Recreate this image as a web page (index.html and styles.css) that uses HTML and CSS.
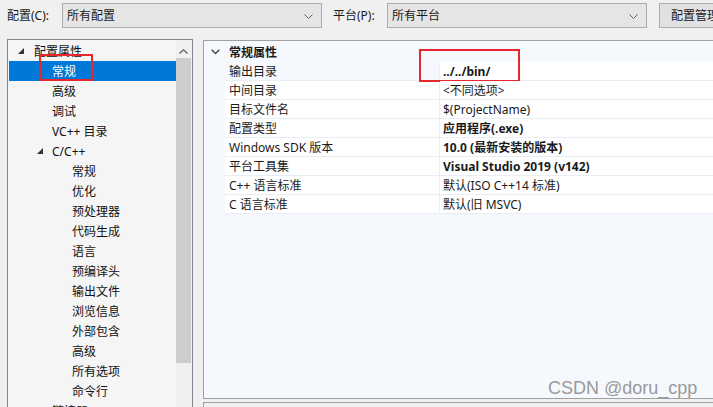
FILE: index.html
```html
<!DOCTYPE html>
<html lang="zh-CN">
<head>
<meta charset="utf-8">
<title>属性页</title>
<link rel="stylesheet" href="styles.css">
</head>
<body>
<div class="topbar">
  <span class="lbl">配置(C):</span>
  <div class="combo combo-1"><span>所有配置</span><svg class="chev" width="9" height="5" viewBox="0 0 9 5"><polyline points="0.5,0.5 4.5,4.5 8.5,0.5" fill="none" stroke="#606060" stroke-width="1"/></svg></div>
  <span class="lbl lbl-2">平台(P):</span>
  <div class="combo combo-2"><span>所有平台</span><svg class="chev" width="9" height="5" viewBox="0 0 9 5"><polyline points="0.5,0.5 4.5,4.5 8.5,0.5" fill="none" stroke="#606060" stroke-width="1"/></svg></div>
  <div class="btn">配置管理器(O)...</div>
</div>
<div class="main">
  <div class="tree">
    <div class="tree-list">
      <div class="node lvl0"><span class="tri"></span>配置属性</div>
      <div class="node lvl1 selected">常规<span class="mark mark-tree"></span></div>
      <div class="node lvl1">高级</div>
      <div class="node lvl1">调试</div>
      <div class="node lvl1">VC++ 目录</div>
      <div class="node lvl1 has-tri"><span class="tri"></span>C/C++</div>
      <div class="node lvl2">常规</div>
      <div class="node lvl2">优化</div>
      <div class="node lvl2">预处理器</div>
      <div class="node lvl2">代码生成</div>
      <div class="node lvl2">语言</div>
      <div class="node lvl2">预编译头</div>
      <div class="node lvl2">输出文件</div>
      <div class="node lvl2">浏览信息</div>
      <div class="node lvl2">外部包含</div>
      <div class="node lvl2">高级</div>
      <div class="node lvl2">所有选项</div>
      <div class="node lvl2">命令行</div>
      <div class="node lvl1 has-tri"><span class="tri tri-closed"></span>链接器</div>
    </div>
    <div class="vscroll">
      <svg class="up" width="9" height="5" viewBox="0 0 9 5"><polyline points="0.5,4.5 4.5,0.8 8.5,4.5" fill="none" stroke="#606060" stroke-width="1.3"/></svg>
      <div class="thumb"></div>
    </div>
  </div>
  <div class="right">
    <div class="grid">
      <div class="cat"><svg class="cat-chev" width="9" height="6" viewBox="0 0 9 6"><polyline points="0.7,0.8 4.5,4.6 8.3,0.8" fill="none" stroke="#444" stroke-width="1.4"/></svg><span>常规属性</span></div>
      <div class="row first"><div class="name">输出目录</div><div class="val b">../../bin/<span class="mark mark-grid"></span></div></div>
      <div class="row"><div class="name">中间目录</div><div class="val">&lt;不同选项&gt;</div></div>
      <div class="row"><div class="name">目标文件名</div><div class="val">$(ProjectName)</div></div>
      <div class="row"><div class="name">配置类型</div><div class="val b">应用程序(.exe)</div></div>
      <div class="row"><div class="name">Windows SDK 版本</div><div class="val b">10.0 (最新安装的版本)</div></div>
      <div class="row"><div class="name">平台工具集</div><div class="val b">Visual Studio 2019 (v142)</div></div>
      <div class="row"><div class="name">C++ 语言标准</div><div class="val">默认(ISO C++14 标准)</div></div>
      <div class="row"><div class="name">C 语言标准</div><div class="val">默认(旧 MSVC)</div></div>
    </div>
    <div class="desc"></div>
  </div>
</div>
<div class="watermark">CSDN @doru_cpp</div>
</body>
</html>
```
FILE: styles.css
```css
* { box-sizing: border-box; }
html, body { margin: 0; padding: 0; }
body {
  width: 713px;
  height: 407px;
  overflow: hidden;
  position: relative;
  background: #f0f0f0;
  color: #1a1a1a;
  font-family: "Noto Sans", "Noto Sans CJK SC", sans-serif;
  font-size: 12px;
  line-height: 16px;
}
.topbar {
  height: 39px;
  display: flex;
  align-items: flex-start;
  padding-top: 3px;
  padding-left: 7px;
  white-space: nowrap;
}
.lbl { margin-top: 5px; width: 55px; flex-shrink: 0; }
.lbl-2 { width: 54px; margin-left: 11px; }
.combo {
  height: 25px;
  width: 260px;
  flex-shrink: 0;
  background: #e5e5e5;
  border: 1px solid #acacac;
  display: flex;
  align-items: center;
  justify-content: space-between;
  padding: 1px 8px 0 4px;
}
.btn {
  margin-left: 12px;
  height: 25px;
  width: 90px;
  flex-shrink: 0;
  background: #e1e1e1;
  border: 1px solid #adadad;
  padding: 4px 0 0 11px;
}
.main {
  display: flex;
  align-items: flex-start;
  padding-left: 7px;
}
.tree {
  width: 186px;
  height: 400px;
  flex-shrink: 0;
  background: #f5f5f5;
  border: 1px solid #828790;
  border-bottom: none;
  display: flex;
}
.tree-list {
  flex: 1;
  padding: 1px 0 0 1px;
}
.node {
  height: 20px;
  line-height: 21px;
  position: relative;
  white-space: nowrap;
  color: #111;
}
.lvl0 { padding-left: 25px; }
.lvl1 { padding-left: 43px; }
.lvl2 { padding-left: 63px; }
.selected { background: #0078d7; color: #fff; }
.tri {
  position: absolute;
  width: 0; height: 0;
  border-left: 6px solid transparent;
  border-bottom: 6px solid #333;
  top: 7px;
}
.lvl0 .tri { left: 9px; }
.has-tri .tri { left: 28px; }
.tri-closed {
  border: none;
  border-left: 4px solid #555;
  border-top: 4px solid transparent;
  border-bottom: 4px solid transparent;
  top: 6px;
}
.mark {
  position: absolute;
  border: 2px solid #e8262d;
  pointer-events: none;
}
.mark-tree { left: 30px; top: -7px; width: 54px; height: 27px; }
.vscroll {
  width: 16px;
  background: #f0f0f0;
  position: relative;
}
.up { position: absolute; left: 3px; top: 9px; }
.thumb {
  position: absolute;
  left: 0; right: 1px;
  top: 18px;
  height: 305px;
  background: #cdcdcd;
}
.right {
  margin-left: 10px;
  margin-top: 1px;
  width: 540px;
  flex-shrink: 0;
}
.grid {
  height: 359px;
  background: #f5f8fc;
  border: 1px solid #a0a0a0;
  border-right: none;
}
.cat {
  height: 21px;
  display: flex;
  align-items: center;
  padding-top: 3px;
  font-weight: bold;
  color: #1a1a1a;
}
.cat-chev { margin-left: 7px; margin-right: 9px; margin-top: -2px; }
.row {
  height: 19px;
  display: flex;
  margin-left: 21px;
  border-bottom: 1px solid #e9eef5;
}
.name, .val {
  line-height: 18px;
  padding-top: 1px;
  white-space: nowrap;
  background: #fff;
  padding-left: 4px;
}
.name { width: 215px; border-right: 1px solid #e9eef5; }
.val { flex: 1; position: relative; padding-left: 3px; }
.row.first .name { background: #f5f8fc; }
.b { font-weight: bold; }
.mark-grid { left: -21px; top: -13px; width: 101px; height: 33px; }
.desc {
  margin-top: 3px;
  height: 20px;
  border: 1px solid #a0a0a0;
  border-right: none;
  background: #f0f0f0;
}
.watermark {
  position: absolute;
  left: 548px;
  top: 378px;
  font-family: "Liberation Sans", Arial, sans-serif;
  font-size: 18px;
  line-height: 20px;
  color: #9a9a9a;
}
```
